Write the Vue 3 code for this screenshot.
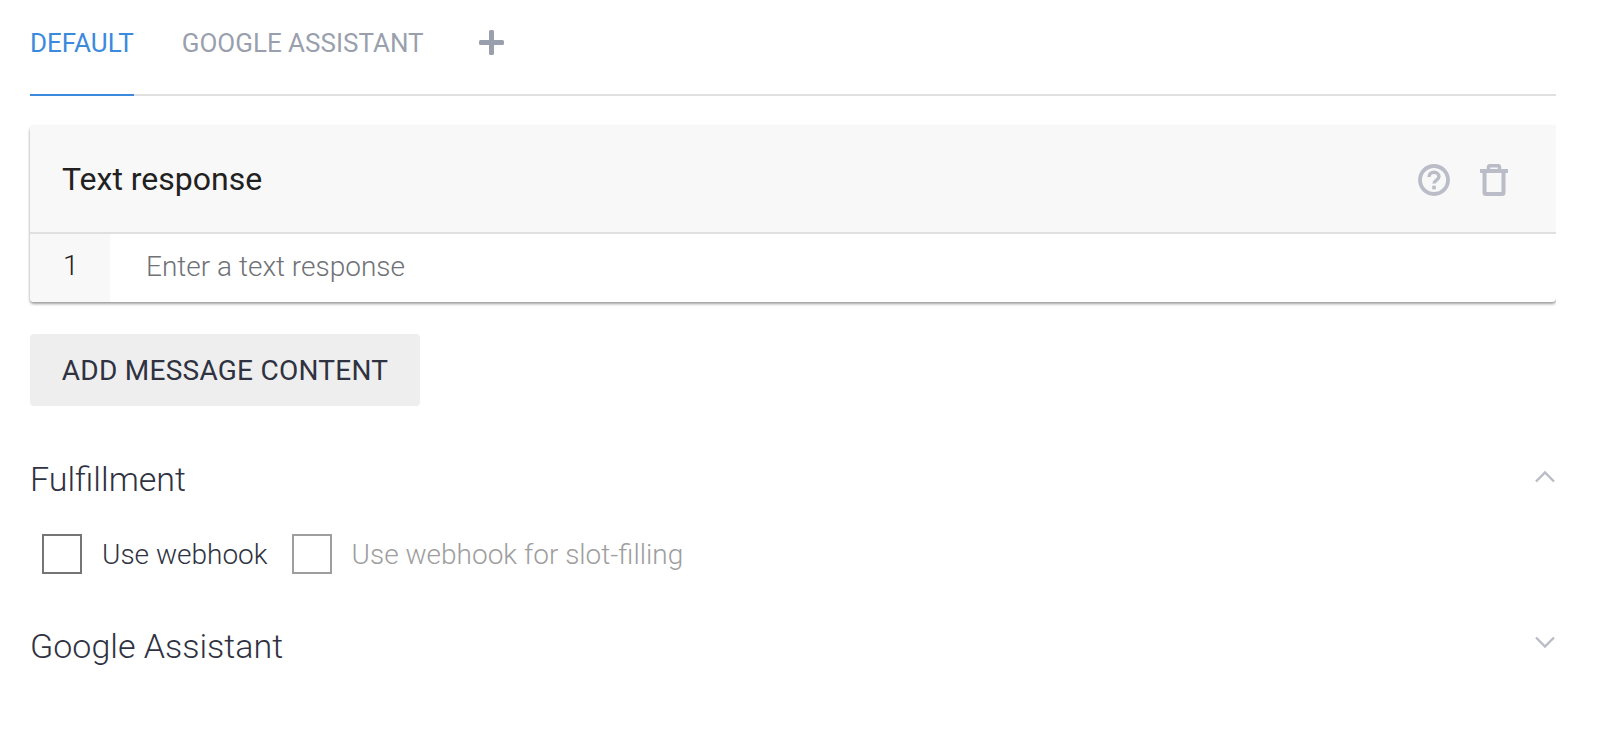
<template>
  <div class="page">
    <div class="tabs">
      <div v-for="tab in tabs" :key="tab" class="tab" :class="{ active: tab === activeTab }">{{ tab }}</div>
      <div class="tab-add">
        <svg width="25" height="25" viewBox="0 0 25 25"><path d="M10 1.500a1.500 1.500 0 0 1 1.500-1.500h2a1.500 1.500 0 0 1 1.500 1.500V10h8.500a1.500 1.500 0 0 1 1.500 1.500v2a1.500 1.500 0 0 1-1.500 1.500H15v8.500a1.500 1.500 0 0 1-1.500 1.500h-2a1.500 1.500 0 0 1-1.500-1.500V15H1.500A1.500 1.500 0 0 1 0 13.500v-2A1.500 1.500 0 0 1 1.500 10H10z" fill="#9a9fae" /></svg>
      </div>
    </div>

    <div class="card">
      <div class="card-head">
        <span class="card-title">Text response</span>
        <div class="card-icons">
          <svg width="32" height="32" viewBox="0 0 32 32">
            <circle cx="16" cy="16" r="14" fill="none" stroke="#babcc7" stroke-width="3.800" />
            <path d="M11 13c0-2.800 2.200-4.700 5-4.700s5 1.900 5 4.300c0 3.500-5 3.500-5 7" fill="none" stroke="#babcc7" stroke-width="3.400" />
            <rect x="14.200" y="21.700" width="3.600" height="3.600" fill="#babcc7" />
          </svg>
          <svg width="28" height="32" viewBox="0 0 28 32">
            <path d="M4.500 7h19v21.500a1.500 1.500 0 0 1-1.500 1.500H6a1.500 1.500 0 0 1-1.500-1.500z" fill="none" stroke="#babcc7" stroke-width="4" />
            <path d="M0 7h28" stroke="#babcc7" stroke-width="4" />
            <path d="M8.500 6V3a1.300 1.300 0 0 1 1.300-1.300h8.400A1.300 1.300 0 0 1 19.500 3v3" fill="none" stroke="#babcc7" stroke-width="3.500" />
          </svg>
        </div>
      </div>
      <div class="card-row">
        <div class="row-num">1</div>
        <div class="row-input">Enter a text response</div>
      </div>
    </div>

    <button class="add-btn">ADD MESSAGE CONTENT</button>

    <div class="section fulfillment">
      <span class="section-title">Fulfillment</span>
      <svg class="chev up" width="20" height="13" viewBox="0 0 20 13"><path d="M1 11.500 10 2.500l9 9" fill="none" stroke="#babcc7" stroke-width="2.400" /></svg>
    </div>

    <div class="checks">
      <label class="check"><span class="box"></span>Use webhook</label>
      <label class="check disabled"><span class="box"></span>Use webhook for slot-filling</label>
    </div>

    <div class="section assistant">
      <span class="section-title">Google Assistant</span>
      <svg class="chev down" width="20" height="13" viewBox="0 0 20 13"><path d="M1 1.500 10 10.500l9-9" fill="none" stroke="#babcc7" stroke-width="2.400" /></svg>
    </div>
  </div>
</template>

<script setup>
const tabs = ['DEFAULT', 'GOOGLE ASSISTANT']
const activeTab = 'DEFAULT'
</script>

<style>
html, body {
  background: #fff;
}
</style>

<style scoped>
.page {
  width: 1526px;
  height: 730px;
  padding-left: 30px;
  font-family: Roboto, "Liberation Sans", sans-serif;
  color: #2f3241;
  overflow: hidden;
}
.tabs {
  display: flex;
  align-items: stretch;
  height: 94px;
  border-bottom: 2px solid #e0e0e0;
}
.tab {
  padding-top: 28px;
  margin-right: 48px;
  font-size: 26px;
  line-height: 30px;
  color: #9a9fae;
  height: 66px;
  margin-bottom: -2px;
}
.tab.active {
  color: #3b8ade;
  border-bottom: 2px solid #3b8ade;
}
.tab-add {
  margin-left: 7px;
  padding-top: 30px;
}
.card {
  margin-top: 30px;
  border-radius: 4px;
  background: #fff;
  box-shadow: 0 2px 3px rgba(0, 0, 0, 0.38), 0 0 2px rgba(0, 0, 0, 0.1);
  overflow: hidden;
}
.card-head {
  display: flex;
  align-items: center;
  justify-content: space-between;
  height: 106px;
  padding: 0 48px 0 32px;
  background: #f8f8f8;
  border-bottom: 2px solid #e0e0e0;
}
.card-title {
  font-size: 32px;
  color: #212121;
}
.card-icons {
  display: flex;
  align-items: center;
  gap: 30px;
  padding-top: 2px;
}
.card-row {
  display: flex;
  height: 68px;
}
.row-num {
  width: 80px;
  padding: 15px 0 0 33px;
  box-sizing: border-box;
  font-size: 28px;
  font-weight: 300;
  color: #212121;
  background: #f8f8f8;
}
.row-input {
  padding: 16px 0 0 36px;
  font-size: 28px;
  font-weight: 300;
  color: #6f7176;
}
.add-btn {
  display: block;
  margin-top: 32px;
  width: 390px;
  height: 72px;
  border: 0;
  border-radius: 4px;
  background: #eee;
  color: #2f3241;
  font-family: inherit;
  font-size: 28px;
  letter-spacing: 0.25px;
}
.section {
  display: flex;
  align-items: center;
  justify-content: space-between;
}
.fulfillment {
  margin-top: 53px;
}
.assistant {
  margin-top: 52px;
}
.section-title {
  font-size: 34px;
  font-weight: 300;
  line-height: 40px;
}
.chev {
  margin-right: 1px;
  margin-bottom: 6px;
}
.chev.down {
  margin-bottom: 8px;
}
.checks {
  display: flex;
  gap: 24px;
  margin-top: 35px;
  padding-left: 12px;
}
.check {
  display: flex;
  align-items: center;
  gap: 20px;
  font-size: 28px;
  font-weight: 300;
}
.box {
  width: 40px;
  height: 40px;
  box-sizing: border-box;
  border: 2px solid #757575;
}
.check.disabled {
  color: #9e9e9e;
}
.check.disabled .box {
  border-color: #9e9e9e;
}
</style>
